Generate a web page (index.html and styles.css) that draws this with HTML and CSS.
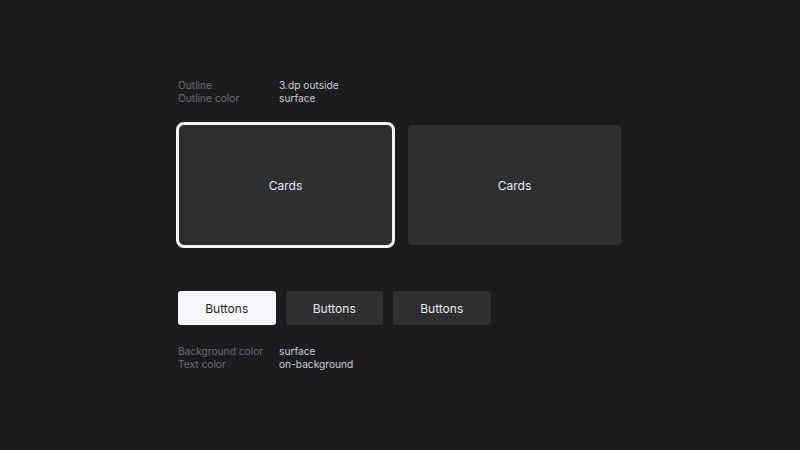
FILE: index.html
```html
<!DOCTYPE html>
<html lang="en">
<head>
    <meta charset="UTF-8">
    <meta name="viewport" content="width=device-width, initial-scale=1.0">
    <title>Cards and buttons</title>
    <link rel="stylesheet" href="styles.css">
</head>
<body>
    <div class="page">
        <div class="spec">
            <span class="key">Outline</span><span class="val">3.dp outside</span>
            <span class="key">Outline color</span><span class="val">surface</span>
        </div>
        <div class="cards">
            <div class="card focused">Cards</div>
            <div class="card">Cards</div>
        </div>
        <div class="buttons">
            <div class="btn focused">Buttons</div>
            <div class="btn">Buttons</div>
            <div class="btn">Buttons</div>
        </div>
        <div class="spec">
            <span class="key">Background color</span><span class="val">surface</span>
            <span class="key">Text color</span><span class="val">on-background</span>
        </div>
    </div>
</body>
</html>
```
FILE: styles.css
```css
*{
    margin: 0;
    padding: 0;
    box-sizing: border-box;
}
body{
    background-color: #1c1c1e;
    font-family: Inter, "Liberation Sans", sans-serif;
    height: 100vh;
}
.page{
    padding: 79px 0 0 178px;
    display: flex;
    flex-direction: column;
}
.spec{
    display: grid;
    grid-template-columns: 101px auto;
    font-size: 10.2px;
    line-height: 13px;
}
.key{
    color: #6a6a6e;
}
.val{
    color: #cfcfd2;
}
.cards{
    display: flex;
    gap: 16px;
    margin-top: 20px;
    margin-left: 1px;
}
.card{
    width: 213px;
    height: 120px;
    background-color: #2e2f31;
    border-radius: 4px;
    color: #ececee;
    font-size: 12px;
    display: flex;
    justify-content: center;
    align-items: center;
}
.card.focused{
    outline: 3px solid #f7f7f9;
    border-radius: 5px;
}
.buttons{
    display: flex;
    gap: 10px;
    margin-top: 46px;
}
.btn{
    width: 97.5px;
    height: 34px;
    background-color: #2e2f31;
    border-radius: 3px;
    color: #e8e8ea;
    font-size: 12px;
    display: flex;
    justify-content: center;
    align-items: center;
}
.btn.focused{
    background-color: #f8f8fc;
    color: #1e1e20;
}
.buttons + .spec{
    margin-top: 20px;
}
```
